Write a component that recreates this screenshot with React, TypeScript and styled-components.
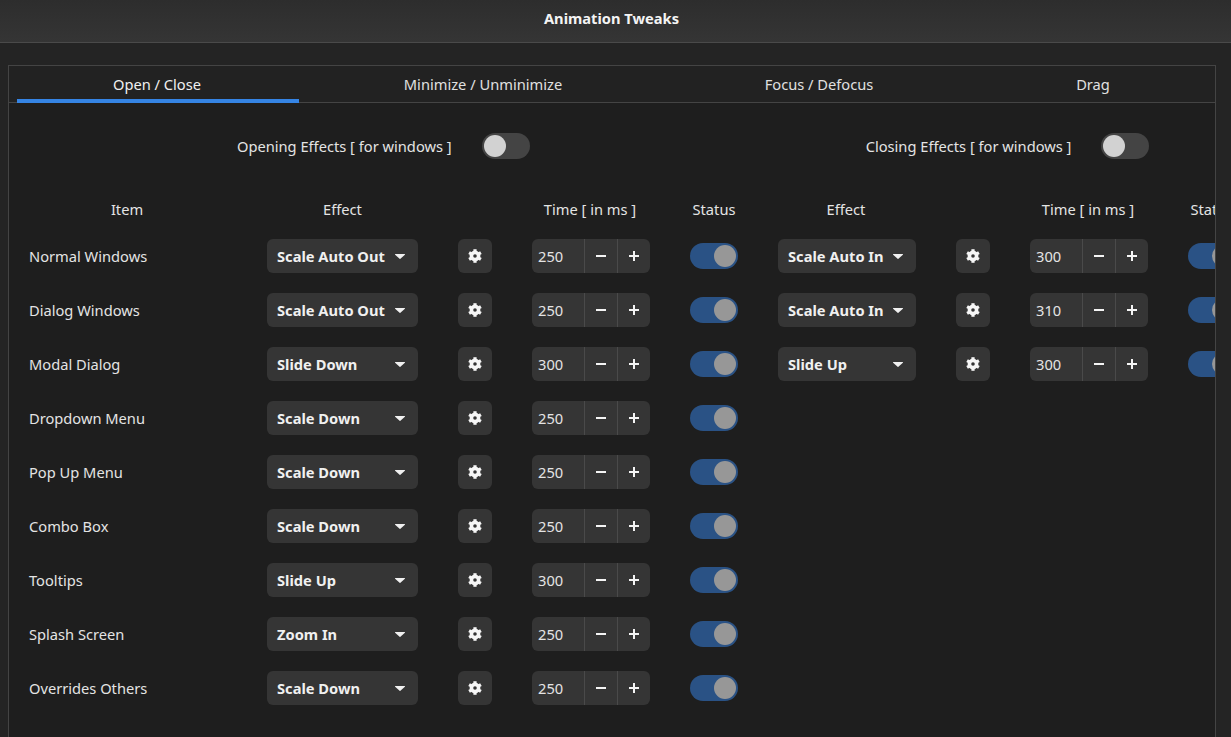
import React from "react";
import styled, { createGlobalStyle } from "styled-components";

const Global = createGlobalStyle`
  html, body { margin: 0; height: 100%; background: #242424; overflow: hidden; }
  #root { height: 100%; }
`;

const Window = styled.div`
  width: 1231px;
  height: 737px;
  display: flex;
  flex-direction: column;
  overflow: hidden;
  background: #242424;
  color: #eeeeee;
  font-family: "Noto Sans", sans-serif;
  font-size: 14.67px;
  line-height: 20px;
`;

const HeaderBar = styled.header`
  flex: 0 0 43px;
  box-sizing: border-box;
  display: flex;
  align-items: center;
  justify-content: center;
  padding: 0 8px 6px 0;
  background: linear-gradient(#2d2d2d, #353535);
  border-bottom: 1px solid #4a4a4a;
  font-weight: 700;
  color: #f4f4f4;
`;

const Frame = styled.main`
  flex: 1;
  min-height: 0;
  margin: 22px 15px 0 8px;
  border: 1px solid #444444;
  border-bottom: none;
  background: #1e1e1e;
  display: flex;
  flex-direction: column;
  overflow: hidden;
`;

const TabBar = styled.nav`
  flex: 0 0 37px;
  height: 37px;
  box-sizing: border-box;
  display: grid;
  grid-template-columns: 282px 368px 304px 244px;
  grid-template-rows: 36px;
  padding-left: 8px;
  border-bottom: 1px solid #444444;
  background: #222222;
`;

const Tab = styled.div<{ $active?: boolean }>`
  display: flex;
  justify-content: center;
  height: 37px;
  box-sizing: border-box;
  padding: 8px ${(p) => (p.$active ? "2px" : "0")} 0 0;
  color: ${(p) => (p.$active ? "#f0f0f0" : "#e0e0e0")};
  border-bottom: 4px solid ${(p) => (p.$active ? "#3584e4" : "transparent")};
`;

const Pane = styled.section`
  flex: 1;
  min-height: 0;
  overflow: hidden;
  padding: 30px 0 0 20px;
  display: flex;
  flex-direction: column;
  gap: 40px;
`;

const TopRow = styled.div`
  display: flex;
  align-items: center;
  padding-left: 208px;
  gap: 336px;
`;

const TopGroup = styled.div`
  display: flex;
  align-items: center;
  gap: 30px;
  color: #e4e4e4;
`;

const SwitchTrack = styled.div<{ $on?: boolean }>`
  flex: none;
  width: 48px;
  height: 26px;
  box-sizing: border-box;
  padding: 2px;
  border-radius: 13px;
  display: flex;
  justify-content: ${(p) => (p.$on ? "flex-end" : "flex-start")};
  background: ${(p) => (p.$on ? "#2a5285" : "#444444")};
`;

const SwitchKnob = styled.div<{ $on?: boolean }>`
  width: 22px;
  height: 22px;
  border-radius: 50%;
  background: ${(p) => (p.$on ? "#979797" : "#d2d2d2")};
`;

const Table = styled.div`
  display: flex;
  flex-direction: column;
  gap: 20px;
`;

const Row = styled.div`
  display: grid;
  grid-template-columns: 198px 151px 34px 118px 48px 138px 34px 118px 48px;
  column-gap: 40px;
  align-items: center;
  width: max-content;
`;

const ColHead = styled.div<{ $col: number; $nudge?: boolean }>`
  grid-column: ${(p) => p.$col};
  padding-right: ${(p) => (p.$nudge ? "2px" : "0")};
  text-align: center;
  white-space: nowrap;
  color: #e4e4e4;
`;

const ItemLabel = styled.div`
  color: #e4e4e4;
`;

const Dropdown = styled.div`
  height: 34px;
  box-sizing: border-box;
  padding: 0 13px 0 10px;
  display: flex;
  align-items: center;
  justify-content: space-between;
  border-radius: 6px;
  background: #353535;
  font-weight: 700;
  color: #f0f0f0;
`;

const Arrow = styled.svg`
  width: 10px;
  height: 5px;
  fill: #f0f0f0;
`;

const GearButton = styled.div`
  height: 34px;
  display: flex;
  align-items: center;
  justify-content: center;
  border-radius: 6px;
  background: #353535;
`;

const GearIcon = styled.svg`
  width: 14px;
  height: 14px;
  fill: none;
  stroke: #f6f6f6;
`;

const Spin = styled.div`
  height: 34px;
  display: grid;
  grid-template-columns: 52px 33px 33px;
  border-radius: 6px;
  background: #353535;
  overflow: hidden;
`;

const SpinValue = styled.div`
  display: flex;
  align-items: center;
  padding-left: 6px;
  color: #e4e4e4;
`;

const SpinButton = styled.div`
  display: flex;
  align-items: center;
  justify-content: center;
  border-left: 1px solid #4a4a4a;
`;

const SpinIcon = styled.svg`
  width: 12px;
  height: 12px;
  stroke: #f4f4f4;
  stroke-width: 2;
  fill: none;
`;

const Switch = ({ on }: { on?: boolean }) => (
  <SwitchTrack $on={on}>
    <SwitchKnob $on={on} />
  </SwitchTrack>
);

const Effect = ({ name }: { name: string }) => (
  <Dropdown>
    {name}
    <Arrow viewBox="0 0 10 5">
      <path d="M0.4 0h9.2a.4.4 0 0 1 .3.7L5.4 4.8a.6.6 0 0 1-.8 0L.1.7A.4.4 0 0 1 .4 0z" />
    </Arrow>
  </Dropdown>
);

const TimeSpin = ({ value }: { value: number }) => (
  <Spin>
    <SpinValue>{value}</SpinValue>
    <SpinButton>
      <SpinIcon viewBox="0 0 12 12">
        <path d="M1 6h10" />
      </SpinIcon>
    </SpinButton>
    <SpinButton>
      <SpinIcon viewBox="0 0 12 12">
        <path d="M1 6h10M6 1v10" />
      </SpinIcon>
    </SpinButton>
  </Spin>
);

const Gear = () => (
  <GearButton>
    <GearIcon viewBox="0 0 14 14">
      <circle cx="7" cy="7" r="3.7" strokeWidth="3.4" />
      <g strokeWidth="3.2">
        <path d="M7 .2v13.6" />
        <path d="M1.1 3.6l11.8 6.8" />
        <path d="M1.1 10.4l11.8-6.8" />
      </g>
      <circle cx="7" cy="7" r="1.8" fill="#353535" stroke="none" />
    </GearIcon>
  </GearButton>
);

type Item = { label: string; effect: string; time: number; close?: [string, number] };

const items: Item[] = [
  { label: "Normal Windows", effect: "Scale Auto Out", time: 250, close: ["Scale Auto In", 300] },
  { label: "Dialog Windows", effect: "Scale Auto Out", time: 250, close: ["Scale Auto In", 310] },
  { label: "Modal Dialog", effect: "Slide Down", time: 300, close: ["Slide Up", 300] },
  { label: "Dropdown Menu", effect: "Scale Down", time: 250 },
  { label: "Pop Up Menu", effect: "Scale Down", time: 250 },
  { label: "Combo Box", effect: "Scale Down", time: 250 },
  { label: "Tooltips", effect: "Slide Up", time: 300 },
  { label: "Splash Screen", effect: "Zoom In", time: 250 },
  { label: "Overrides Others", effect: "Scale Down", time: 250 },
];

export default function App() {
  return (
    <Window>
      <Global />
      <HeaderBar>Animation Tweaks</HeaderBar>
      <Frame>
        <TabBar>
          <Tab $active>Open / Close</Tab>
          <Tab>Minimize / Unminimize</Tab>
          <Tab>Focus / Defocus</Tab>
          <Tab>Drag</Tab>
        </TabBar>
        <Pane>
          <TopRow>
            <TopGroup>
              Opening Effects [ for windows ]
              <Switch />
            </TopGroup>
            <TopGroup>
              Closing Effects [ for windows ]
              <Switch />
            </TopGroup>
          </TopRow>
          <Table>
            <Row>
              <ColHead $col={1} $nudge>Item</ColHead>
              <ColHead $col={2}>Effect</ColHead>
              <ColHead $col={4} $nudge>Time [ in ms ]</ColHead>
              <ColHead $col={5}>Status</ColHead>
              <ColHead $col={6} $nudge>Effect</ColHead>
              <ColHead $col={8} $nudge>Time [ in ms ]</ColHead>
              <ColHead $col={9}>Status</ColHead>
            </Row>
            {items.map((it) => (
              <Row key={it.label}>
                <ItemLabel>{it.label}</ItemLabel>
                <Effect name={it.effect} />
                <Gear />
                <TimeSpin value={it.time} />
                <Switch on />
                {it.close && (
                  <>
                    <Effect name={it.close[0]} />
                    <Gear />
                    <TimeSpin value={it.close[1]} />
                    <Switch on />
                  </>
                )}
              </Row>
            ))}
          </Table>
        </Pane>
      </Frame>
    </Window>
  );
}
